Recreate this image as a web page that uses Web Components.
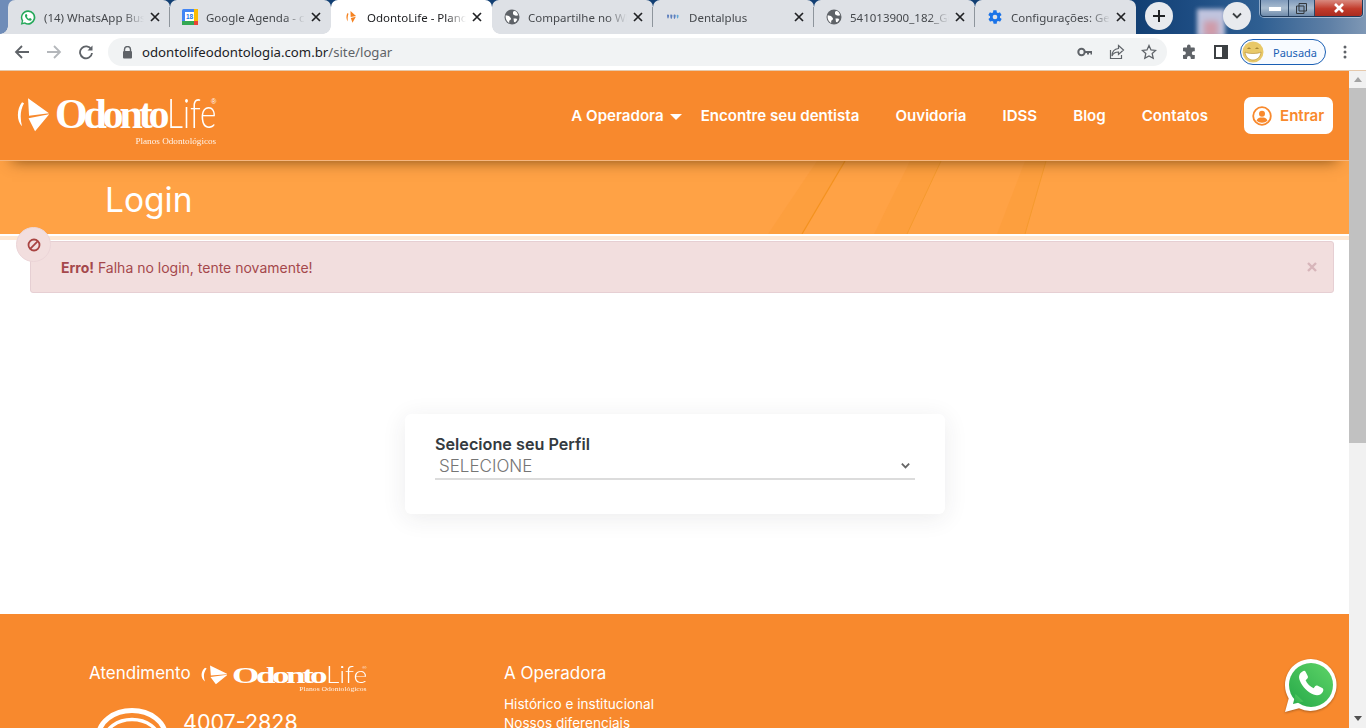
<!DOCTYPE html>
<html lang="pt-BR">
<head>
<meta charset="utf-8">
<title>OdontoLife</title>
<style>
  html, body { margin: 0; height: 100%; overflow: hidden; background: #fff; }
  body { font-family: Inter, "Liberation Sans", sans-serif; }
</style>
</head>
<body>
<browser-frame>
  <chrome-tab slot="tabs" icon="whatsapp" sep>(14) WhatsApp Business</chrome-tab>
  <chrome-tab slot="tabs" icon="calendar">Google Agenda - calendário</chrome-tab>
  <chrome-tab slot="tabs" icon="odonto" active>OdontoLife - Planos</chrome-tab>
  <chrome-tab slot="tabs" icon="globe" sep>Compartilhe no WhatsApp</chrome-tab>
  <chrome-tab slot="tabs" icon="dental" sep>Dentalplus</chrome-tab>
  <chrome-tab slot="tabs" icon="globe" sep>541013900_182_Guia</chrome-tab>
  <chrome-tab slot="tabs" icon="gear">Configurações: Geral</chrome-tab>

  <site-header></site-header>
  <page-banner>Login</page-banner>
  <alert-box><b>Erro!</b> Falha no login, tente novamente!</alert-box>
  <login-card></login-card>
  <site-footer></site-footer>
</browser-frame>

<script>
const ICONS = {
  whatsapp: `<svg viewBox="0 0 16 16" width="17" height="17"><path d="M8 .8a7.200 7.200 0 0 0-6.200 10.800L.8 15.200l3.700-1A7.200 7.200 0 1 0 8 .8z" fill="#25a85a"/><path d="M8 2.400a5.600 5.600 0 0 0-4.700 8.700l-.6 2.200 2.300-.6A5.600 5.600 0 1 0 8 2.400z" fill="#fff"/><path d="M5.900 4.600c-.9.5-1.200 1.700-.6 3 .7 1.500 2 2.900 3.600 3.500 1.200.4 2.300 0 2.700-.9.2-.5 0-.8-.3-1l-1.200-.6c-.3-.1-.5 0-.7.3l-.4.5c-.9-.4-1.700-1.200-2.200-2.200l.4-.4c.2-.2.3-.5.1-.8l-.6-1.200c-.2-.3-.5-.4-.8-.2z" fill="#25a85a"/></svg>`,
  calendar: `<svg viewBox="0 0 16 16" width="16" height="16"><rect width="16" height="16" rx="1.500" fill="#4285f4"/><rect x="12" width="4" height="12" fill="#fbbc04"/><rect y="12" width="12" height="4" fill="#34a853"/><rect x="12" y="12" width="4" height="4" fill="#ea4335"/><rect x="3" y="3" width="9" height="9" fill="#fff"/><text x="7.500" y="10.300" font-size="6.500" font-family="Liberation Sans" font-weight="700" text-anchor="middle" fill="#1a73e8">18</text></svg>`,
  odonto: `<svg viewBox="0 0 16 16" width="16" height="16"><path d="M7.500 2l5.500 5-5.300 1z" fill="#f58220"/><path d="M7.800 9l5-1.200-3.300 6z" fill="#f58220"/><path d="M4.500 4C3 6.500 3 10 4.800 12.500 4.500 9.500 4.700 7 5.500 4.800z" fill="#f58220"/></svg>`,
  globe: `<svg viewBox="0 0 16 16" width="16" height="16"><circle cx="8" cy="8" r="7.500" fill="#5f6368"/><path d="M1.800 6.200l3.200.8 2 2.200-.3 1.500-1.500 1v2.200C3 12.800 1 9.800 1.800 6.200zM9 2.800l1.800-1 2 1.500 1.500 3-2.300.5-1.500-.6L9 5.200zM9.500 9.500h2.800l1 1.200-2 2.600-1.300-.3z" fill="#fff"/></svg>`,
  dental: `<svg viewBox="0 0 16 16" width="16" height="16"><path d="M2 6c.8-.7 1.700-.4 2 0s-.3 3.600-1 3.600S2.200 8 2 6zM5.300 5.700c.8-.5 1.700-.3 2 .2s-.2 4-1 4-1-2.200-1-4.200zM8.600 5.900c.8-.6 1.700-.4 2 .2s-.3 3.800-1.100 3.800-.8-2-.9-4z" fill="#5d7fbd"/><path d="M11.700 6c.7-.5 1.500-.3 1.800.2s-.2 3.300-.9 3.300-.8-1.700-.9-3.500z" fill="#5fa8d8"/></svg>`,
  gear: `<svg viewBox="0 0 24 24" width="16" height="16"><path fill="#1a73e8" d="M19.400 13c.1-.3.1-.7.1-1s0-.7-.1-1l2.100-1.600c.2-.2.2-.4.1-.6l-2-3.500c-.1-.2-.4-.3-.6-.2l-2.500 1a7 7 0 0 0-1.700-1l-.4-2.600c0-.3-.2-.5-.5-.5h-4c-.3 0-.5.2-.5.4l-.4 2.700a7 7 0 0 0-1.700 1l-2.500-1c-.2-.1-.5 0-.6.2l-2 3.500c-.1.2-.1.4.1.6L4.600 11c-.1.3-.1.7-.1 1s0 .7.1 1l-2.100 1.600c-.2.2-.2.4-.1.600l2 3.500c.1.2.4.3.6.2l2.500-1a7 7 0 0 0 1.700 1l.4 2.600c0 .3.2.5.5.5h4c.3 0 .5-.2.5-.4l.4-2.700a7 7 0 0 0 1.700-1l2.500 1c.2.1.5 0 .6-.2l2-3.500c.1-.2.1-.4-.1-.6zM12 15.500a3.500 3.500 0 1 1 0-7 3.500 3.500 0 0 1 0 7z"/></svg>`
};

class ChromeTab extends HTMLElement {
  connectedCallback() {
    if (this.shadowRoot) return;
    this.attachShadow({ mode: 'open' });
    const icon = ICONS[this.getAttribute('icon')] || '';
    this.shadowRoot.innerHTML = `
      <style>
        :host { display: flex; align-items: center; gap: 8px; width: 161px; height: 34px; box-sizing: border-box; padding: 0 10px 0 12px; background: #dee1e6; border-radius: 7px 7px 0 0; font: 11.500px "Noto Sans", "Open Sans", sans-serif; color: #45484c; position: relative; flex: none; }
        :host(:first-child) { width: 162px; }
        :host([active]) { background: #fff; color: #202124; z-index: 1; }
        .ico { width: 16px; height: 16px; flex: none; display: flex; }
        .title { flex: 1; min-width: 0; overflow: hidden; white-space: nowrap; -webkit-mask-image: linear-gradient(90deg, #000 78%, transparent 98%); mask-image: linear-gradient(90deg, #000 78%, transparent 98%); }
        .x { flex: none; width: 10px; height: 10px; margin-left: -4px; }
        .x path { stroke: #202124; stroke-width: 1.700; fill: none; }
        .sep { display: none; position: absolute; right: 0; top: 7px; height: 20px; width: 1px; background: #8e959c; }
        :host([sep]) .sep { display: block; }
        .fl { display: none; position: absolute; bottom: 0; width: 8px; height: 8px; }
        .fl.l { left: -8px; background: radial-gradient(circle at 0 0, transparent 7.500px, var(--fc) 8px); }
        .fl.r { right: -8px; background: radial-gradient(circle at 100% 0, transparent 7.500px, var(--fc) 8px); }
        :host { --fc: #dee1e6; }
        :host([active]) { --fc: #fff; }
        :host([active]) .fl, :host(:first-child) .fl.l, :host(:last-child) .fl.r { display: block; }
      </style>
      <span class="fl l"></span>
      <span class="ico">${icon}</span>
      <span class="title"><slot></slot></span>
      <svg class="x" viewBox="0 0 10 10"><path d="M1 1l8 8M9 1l-8 8"/></svg>
      <span class="sep"></span>
      <span class="fl r"></span>`;
  }
}
customElements.define('chrome-tab', ChromeTab);

class BrowserFrame extends HTMLElement {
  constructor() {
    super();
    this.attachShadow({ mode: 'open' });
    this.shadowRoot.innerHTML = `
      <style>
        :host { display: flex; flex-direction: column; width: 1366px; height: 728px; overflow: hidden; position: relative; }
        .strip { height: 34px; flex: none; display: flex; align-items: flex-start; padding-left: 8px; position: relative; overflow: hidden;
          background: linear-gradient(90deg, #6f8cb8 0, #6f8cb8 14px, #123f73 15px, #123f73 1136px, #1d4c82 1190px, #2f5f92 1260px, #5f80a6 1330px, #7f98b5 1366px); }
        .blur { position: absolute; left: 1197px; top: 9px; width: 28px; height: 28px; background: #c0c4de; filter: blur(2px); }
        .blur::after { content: ""; position: absolute; left: 7px; top: 12px; width: 14px; height: 16px; background: #cf9aa8; filter: blur(2px); }
        .tabs { display: flex; position: relative; }
        .round { position: absolute; top: 2px; width: 28px; height: 28px; border-radius: 50%; display: flex; align-items: center; justify-content: center; background: #e8eaee; }
        .new { left: 1145px; }
        .more { left: 1223px; }
        .win { position: absolute; left: 1260px; top: 0; width: 103px; height: 17px; display: flex; border: 1px solid #1f3a5a; border-top: 0; border-radius: 0 0 4px 4px; overflow: hidden; box-sizing: border-box; box-shadow: 0 0 0 1px rgba(220,232,245,.55); }
        .win span { display: flex; align-items: center; justify-content: center; height: 100%; background: linear-gradient(#7f9abb, #a9bccf 50%, #6e8aab); border-right: 1px solid #2b4666; box-sizing: border-box; }
        .win .min { width: 28px; } .win .max { width: 26px; }
        .win .cls { flex: 1; background: linear-gradient(#d98a7f, #c23b2b 55%, #a92c20); border: 0; }
        .bar { height: 36px; flex: none; background: #fff; display: flex; align-items: center; position: relative; }
        .nav { width: 32px; display: flex; justify-content: center; flex: none; }
        .url { flex: none; margin-left: 6px; width: 1059px; height: 28px; border-radius: 14px; background: #f1f3f4; display: flex; align-items: center; box-sizing: border-box; padding: 0 10px 0 14px; font: 13.200px "Noto Sans", "Open Sans", sans-serif; color: #202124; }
        .url .path { color: #5f6368; }
        .url .lock { margin-right: 9px; flex: none; }
        .url .spacer { flex: 1; }
        .url svg.r { margin-left: 16px; flex: none; }
        .tools { display: flex; align-items: center; flex: none; margin-left: 14px; }
        .pill { display: flex; align-items: center; gap: 9px; width: 86px; height: 26px; box-sizing: border-box; border: 1px solid #1a5fb4; border-radius: 13px; padding-left: 1px; margin-left: 12px; font: 11px "Noto Sans", "Open Sans", sans-serif; color: #1a5fb4; background: #f8fbff; }
        .page { flex: 1; min-height: 0; display: flex; border-top: 1px solid #e6c9ac; }
        .content { width: 1349px; flex: none; display: flex; flex-direction: column; position: relative; overflow: hidden; }
        .sb { flex: 1; background: #f1f1f1; position: relative; display: flex; flex-direction: column; align-items: center; }
        .sb .up { margin-top: 6px; width: 0; height: 0; border: 4px solid transparent; border-top: 0; border-bottom: 5px solid #a3a3a3; }
        .sb .thumb { width: 100%; height: 355px; margin-top: 6px; background: #c1c1c1; }
        .sb .dn { margin-top: auto; margin-bottom: 7px; width: 0; height: 0; border: 4px solid transparent; border-bottom: 0; border-top: 5px solid #505050; }
        .wa { position: absolute; left: 1284px; top: 587px; width: 54px; height: 56px; filter: drop-shadow(0 1px 1px rgba(0,0,0,.3)); }
      </style>
      <div class="strip">
        <div class="blur"></div>
        <div class="tabs"><slot name="tabs"></slot></div>
        <span class="round new"><svg width="14" height="14" viewBox="0 0 14 14"><path d="M7 1v12M1 7h12" stroke="#202124" stroke-width="2"/></svg></span>
        <span class="round more"><svg width="12" height="8" viewBox="0 0 12 8"><path d="M2 1.500l4 4 4-4" stroke="#3c4043" stroke-width="1.800" fill="none"/></svg></span>
        <div class="win">
          <span class="min"><svg width="12" height="5"><rect width="12" height="4" y="1" fill="#fff"/></svg></span>
          <span class="max"><svg width="11" height="11" viewBox="0 0 11 11"><path d="M3 .5h7.500V8H3zM.5 3h7.500v7.500H.5z" fill="#8aa2bd" stroke="#33383e"/></svg></span>
          <span class="cls"><svg width="12" height="10" viewBox="0 0 12 10"><path d="M2 1l8 8M10 1l-8 8" stroke="#fff" stroke-width="2.600"/></svg></span>
        </div>
      </div>
      <div class="bar">
        <span class="nav" style="margin-left:6px"><svg width="16" height="16" viewBox="0 0 16 16"><path d="M15 8H2M8 2L2 8l6 6" stroke="#5f6368" stroke-width="1.800" fill="none"/></svg></span>
        <span class="nav"><svg width="16" height="16" viewBox="0 0 16 16"><path d="M1 8h13M8 2l6 6-6 6" stroke="#b4b7bb" stroke-width="1.800" fill="none"/></svg></span>
        <span class="nav"><svg width="16" height="16" viewBox="0 0 16 16"><path d="M13.300 5.500A6 6 0 1 0 14 9" stroke="#5f6368" stroke-width="1.800" fill="none"/><path d="M14.500 1.500v5h-5z" fill="#5f6368"/></svg></span>
        <div class="url">
          <svg class="lock" width="11" height="13" viewBox="0 0 11 13"><path d="M2.500 5V3.500a3 3 0 0 1 6 0V5" stroke="#5f6368" stroke-width="1.400" fill="none"/><rect x="1" y="5" width="9" height="7.500" rx="1" fill="#5f6368"/></svg>
          <span>odontolifeodontologia.com.br<span class="path">/site/logar</span></span>
          <span class="spacer"></span>
          <svg class="r" width="16" height="10" viewBox="0 0 16 10"><circle cx="4.500" cy="5" r="3.200" fill="none" stroke="#5f6368" stroke-width="2"/><path d="M7.500 4h7.500v3.500h-1.500V6h-1.500v1.500H10V6H7.500z" fill="#5f6368"/></svg>
          <svg class="r" width="16" height="16" viewBox="0 0 16 16"><path d="M9.500 1.500l5 4.500-5 4.500V8C6 8 4 9.500 3 12c0-4.500 2.500-7 6.500-7.500z" fill="none" stroke="#5f6368" stroke-width="1.200"/><path d="M1.500 6v8.500h11V11" fill="none" stroke="#5f6368" stroke-width="1.200"/></svg>
          <svg class="r" width="16" height="16" viewBox="0 0 16 16"><path d="M8 1.500l2 4.400 4.700.5-3.500 3.200 1 4.700L8 11.900l-4.200 2.400 1-4.700L1.300 6.400 6 5.900z" fill="none" stroke="#5f6368" stroke-width="1.300"/></svg>
        </div>
        <div class="tools">
          <svg width="16" height="16" viewBox="0 0 16 16"><path d="M6 2.200a1.800 1.800 0 0 1 3.600 0V3.500H13a.8.8 0 0 1 .8.800v3h-1.100a1.900 1.900 0 0 0 0 3.800h1.100v3.100a.8.8 0 0 1-.8.800H9.800v-1a1.900 1.900 0 0 0-3.800 0v1H2.800a.8.8 0 0 1-.8-.8v-3.200h1a1.900 1.900 0 0 0 0-3.800H2v-3A.8.8 0 0 1 2.800 3.500H6z" fill="#5f6368"/></svg>
          <svg style="margin-left:17px" width="14" height="14" viewBox="0 0 14 14"><rect x="1" y="1" width="12" height="12" fill="none" stroke="#3c4043" stroke-width="2"/><rect x="8" y="1" width="5" height="12" fill="#3c4043"/></svg>
          <div class="pill">
            <svg width="22" height="22" viewBox="0 0 22 22"><circle cx="11" cy="11" r="10.500" fill="#e8c868"/><path d="M3 11c2.500 2 13.500 2 16 0-.5 5-4 8-8 8s-7.500-3-8-8z" fill="#fff" stroke="#b08a30" stroke-width=".6"/><path d="M5.500 8c.7-1.300 2.300-1.300 3 0M13.500 8c.7-1.300 2.300-1.300 3 0" stroke="#8a6a20" fill="none"/></svg>
            <span>Pausada</span>
          </div>
          <svg style="margin-left:17px" width="4" height="14" viewBox="0 0 4 14"><circle cx="2" cy="2" r="1.500" fill="#5f6368"/><circle cx="2" cy="7" r="1.500" fill="#5f6368"/><circle cx="2" cy="12" r="1.500" fill="#5f6368"/></svg>
        </div>
      </div>
      <div class="page">
        <div class="content">
          <slot></slot>
          <svg class="wa" viewBox="0 0 54 56"><defs><linearGradient id="wg" x1="0" y1="1" x2="1" y2="0"><stop offset="0" stop-color="#25a848"/><stop offset="1" stop-color="#5fd468"/></linearGradient></defs><path d="M27 1a26 26 0 0 0-22.300 39.400L1 54l14-3.700A26 26 0 1 0 27 1z" fill="#fff"/><circle cx="27" cy="27" r="22" fill="url(#wg)"/><path d="M9 46l2.500-10 8 7.500z" fill="url(#wg)"/><path d="M18.500 13.500c-3 1.500-4.500 5-2.500 9.500 2.500 6 7.500 11 13.500 13.500 4.500 1.700 8 .2 9.500-3 .7-1.500.4-2.700-.8-3.400l-4.500-2.300c-1-.5-1.900-.3-2.600.5l-1.500 1.900c-3.500-1.500-6.500-4.500-8-8l1.600-1.500c.8-.8 1-1.700.5-2.700l-2.100-4.300c-.6-1.200-2-1.100-3.100-.2z" fill="#fff"/></svg>
        </div>
        <div class="sb"><span class="up"></span><span class="thumb"></span><span class="dn"></span></div>
      </div>`;
  }
}
customElements.define('browser-frame', BrowserFrame);

class OdontoLogo extends HTMLElement {
  constructor() {
    super();
    this.attachShadow({ mode: 'open' });
    this.shadowRoot.innerHTML = `
      <style>
        :host { display: inline-block; position: relative; width: 5.56em; height: 1.35em; font-size: 36px; color: #fff; line-height: 1; flex: none; }
        svg { position: absolute; left: 0; top: .16em; width: .92em; height: .96em; }
        .name { position: absolute; left: 1.08em; top: .13em; display: flex; align-items: baseline; white-space: nowrap; }
        .o { font: 700 1.17em/.8 "Liberation Serif", serif; letter-spacing: -.1em; }
        .l { display: inline-block; font: 300 1.15em/.8 Lato, "Liberation Sans", sans-serif; transform: scaleX(.76); transform-origin: left; margin-left: .05em; margin-right: -.37em; }
        .reg { position: absolute; left: 27.100em; top: 1em; font: .2em/1 "Liberation Sans", sans-serif; }
        .tag { position: absolute; right: 0; bottom: -.65em; font: .255em/1 "Liberation Serif", serif; white-space: nowrap; opacity: .9; }
      </style>
      <svg viewBox="0 0 33 34"><path d="M12 1l21 15-20 2.500zM12.500 21l20.500-4L19 34zM6 5C1 11 0 23 6 29 4 21 4 13 8 6z" fill="#fff"/></svg>
      <span class="name"><span class="o">Odonto</span><span class="l">Life</span></span>
      <span class="reg">®</span>
      <span class="tag">Planos Odontológicos</span>`;
  }
}
customElements.define('odonto-logo', OdontoLogo);

class SiteHeader extends HTMLElement {
  constructor() {
    super();
    this.attachShadow({ mode: 'open' });
    this.shadowRoot.innerHTML = `
      <style>
        :host { display: flex; align-items: center; flex: none; height: 90px; background: #f8892d; padding: 0 16px; box-sizing: border-box; position: relative; z-index: 2; box-shadow: 0 12px 14px -12px rgba(70,40,0,.7); border-bottom: 1px solid #f6b77f; font-family: Inter, sans-serif; }
        nav { margin-left: auto; display: flex; align-items: center; gap: 36px; font-size: 15.100px; font-weight: 600; color: #fff; white-space: nowrap; }
        .op { display: flex; align-items: center; gap: 6px; margin-right: -17px; }
        .caret { width: 0; height: 0; margin-top: 3px; border: 6px solid transparent; border-bottom: 0; border-top: 6px solid #fff; }
        .btn { display: flex; align-items: center; gap: 8px; height: 37px; width: 89px; box-sizing: border-box; padding-left: 8px; background: #fff; border-radius: 7px; color: #f8892d; }
      </style>
      <odonto-logo></odonto-logo>
      <nav>
        <span class="op">A Operadora <span class="caret"></span></span>
        <span>Encontre seu dentista</span>
        <span>Ouvidoria</span>
        <span>IDSS</span>
        <span>Blog</span>
        <span>Contatos</span>
        <span class="btn">
          <svg width="20" height="20" viewBox="0 0 20 20"><circle cx="10" cy="10" r="8.800" fill="none" stroke="#f8892d" stroke-width="1.800"/><circle cx="10" cy="7.800" r="3" fill="#f8892d"/><path d="M4.500 14.500c1-2.500 3-3 5.500-3s4.500.5 5.500 3c-3 3-8 3-11 0z" fill="#f8892d"/></svg>
          Entrar
        </span>
      </nav>`;
  }
}
customElements.define('site-header', SiteHeader);

class PageBanner extends HTMLElement {
  constructor() {
    super();
    this.attachShadow({ mode: 'open' });
    this.shadowRoot.innerHTML = `
      <style>
        :host { display: flex; align-items: center; flex: none; height: 79px; box-sizing: border-box; padding: 5px 0 6px 105px; position: relative; overflow: hidden; background: linear-gradient(#ffa245 0 73px, #fff 73px 75px, #fde8d4 75px); color: #fff; font: 400 33.500px Inter, sans-serif; }
        svg { position: absolute; left: 740px; top: 0; width: 340px; height: 73px; }
      </style>
      <svg viewBox="0 0 340 73"><path d="M77 0h28L62 73H28zM170 0h31l-34 73h-33zM285 0h21l-21 73h-28z" fill="#fb9c3a" opacity=".6"/><path d="M105 0L62 73" stroke="#f4921f" stroke-width="1.200" fill="none"/><path d="M201 0l-34 73M306 0l-21 73" stroke="#f59a2e" stroke-width="1" fill="none"/></svg>
      <slot></slot>`;
  }
}
customElements.define('page-banner', PageBanner);

class AlertBox extends HTMLElement {
  constructor() {
    super();
    this.attachShadow({ mode: 'open' });
    this.shadowRoot.innerHTML = `
      <style>
        :host { display: flex; align-items: center; flex: none; position: relative; height: 52px; margin: 1px 15px 0 30px; box-sizing: border-box; padding: 0 16px 0 30px; background: #f2dede; border: 1px solid #e6cfd3; border-radius: 3px; color: #a5484c; font: 14px Inter, sans-serif; }
        ::slotted(b) { font-weight: 700; }
        .ic { position: absolute; left: -15px; top: -15px; width: 35px; height: 35px; border-radius: 50%; background: #f2dede; border: 1px solid #ecd5d8; box-sizing: border-box; display: flex; align-items: center; justify-content: center; }
        .x { margin-left: auto; }
        .txt { white-space: pre; }
      </style>
      <span class="ic"><svg width="14" height="14" viewBox="0 0 14 14"><circle cx="7" cy="7" r="5.500" fill="none" stroke="#a94442" stroke-width="1.800"/><path d="M3.200 10.800l7.600-7.600" stroke="#a94442" stroke-width="1.800"/></svg></span>
      <span class="txt"><slot></slot></span>
      <svg class="x" width="10" height="10" viewBox="0 0 10 10"><path d="M1 1l8 8M9 1l-8 8" stroke="#d7b5ba" stroke-width="2.400"/></svg>`;
  }
}
customElements.define('alert-box', AlertBox);

class LoginCard extends HTMLElement {
  constructor() {
    super();
    this.attachShadow({ mode: 'open' });
    this.shadowRoot.innerHTML = `
      <style>
        :host { display: block; flex: none; width: 540px; height: 100px; margin: 121px 0 100px 405px; box-sizing: border-box; padding: 21px 30px 0; background: #fff; border-radius: 6px; box-shadow: 0 4px 24px rgba(40,40,60,.09); font-family: Inter, sans-serif; }
        label { display: block; font-size: 16.200px; font-weight: 600; color: #343a40; line-height: 19px; }
        .sel { display: flex; align-items: center; height: 24px; border-bottom: 2px solid #dcdcdc; padding: 0 4px; color: #757575; font-size: 17px; font-weight: 300; justify-content: space-between; }
      </style>
      <label>Selecione seu Perfil</label>
      <div class="sel"><span>SELECIONE</span><svg width="11" height="8" viewBox="0 0 12 8"><path d="M2 1.500l4 4 4-4" stroke="#666" stroke-width="2" fill="none"/></svg></div>`;
  }
}
customElements.define('login-card', LoginCard);

class SiteFooter extends HTMLElement {
  constructor() {
    super();
    this.attachShadow({ mode: 'open' });
    this.shadowRoot.innerHTML = `
      <style>
        :host { display: grid; grid-template-columns: 415px 1fr; flex: 1; min-height: 200px; box-sizing: border-box; padding: 47px 0 0 89px; background: #f8892d; color: #fff; font-family: Inter, sans-serif; }
        .at { display: flex; align-items: center; gap: 10px; font-size: 17px; height: 24px; }
        odonto-logo { font-size: 30px; margin-left: -1px; transform: translateY(2px) scaleY(.68); }
        .ph { display: flex; gap: 15px; margin-top: 23px; margin-left: 7px; }
        .num { font-size: 21.500px; line-height: 26px; margin-top: 1px; }
        h4 { margin: 0; font-size: 17px; font-weight: 400; line-height: 24px; }
        ul { list-style: none; margin: 10px 0 0; padding: 0; font-size: 13.600px; line-height: 19px; }
      </style>
      <div>
        <div class="at">Atendimento <odonto-logo></odonto-logo></div>
        <div class="ph">
          <svg width="72" height="60" viewBox="0 0 72 60"><ellipse cx="36" cy="28.500" rx="33.500" ry="26" fill="none" stroke="#fff" stroke-width="5"/><ellipse cx="36" cy="31.500" rx="27" ry="20" fill="none" stroke="#fff" stroke-width="3.500"/></svg>
          <span class="num">4007-2828</span>
        </div>
      </div>
      <div>
        <h4>A Operadora</h4>
        <ul><li>Histórico e institucional</li><li>Nossos diferenciais</li></ul>
      </div>`;
  }
}
customElements.define('site-footer', SiteFooter);
</script>
</body>
</html>
